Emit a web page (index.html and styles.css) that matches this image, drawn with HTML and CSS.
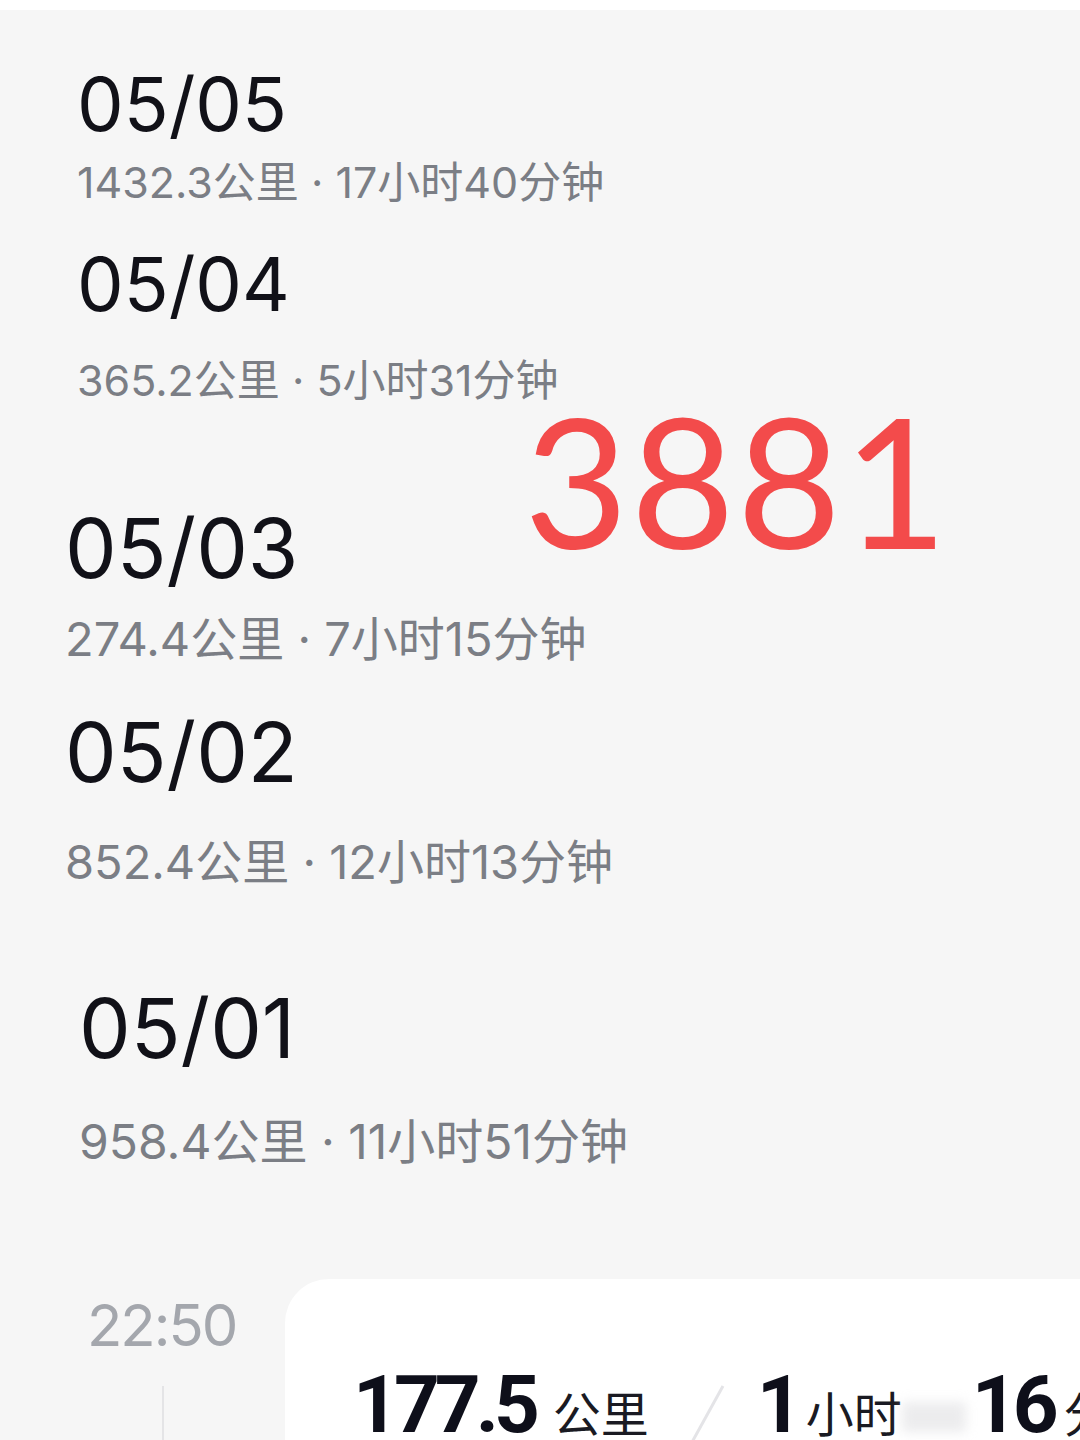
FILE: index.html
```html
<!DOCTYPE html>
<html lang="zh">
<head>
<meta charset="utf-8">
<link rel="stylesheet" href="styles.css">
</head>
<body>
<div class="topstrip"></div>
<main class="page">
  <section class="day d1">
    <div class="date">05/05</div>
    <div class="meta">1432.3公里 · 17小时40分钟</div>
  </section>
  <section class="day d2">
    <div class="date">05/04</div>
    <div class="meta">365.2公里 · 5小时31分钟</div>
    <div class="count">3881</div>
  </section>
  <section class="day d3">
    <div class="date big">05/03</div>
    <div class="meta big">274.4公里 · 7小时15分钟</div>
  </section>
  <section class="day d4">
    <div class="date big">05/02</div>
    <div class="meta big">852.4公里 · 12小时13分钟</div>
  </section>
  <section class="day d5">
    <div class="date big">05/01</div>
    <div class="meta big">958.4公里 · 11小时51分钟</div>
  </section>
  <section class="trip">
    <div class="timecol">
      <div class="time">22:50</div>
      <div class="rail"></div>
    </div>
    <div class="card">
      <div class="stats">
        <span class="num">177.5</span><span class="unit">公里</span>
        <svg class="slash" width="36" height="62" viewBox="0 0 36 62"><line x1="34" y1="2" x2="2" y2="60" stroke="#e4e4e7" stroke-width="3"/></svg>
        <span class="num">1</span><span class="unit u2">小时</span><span class="blur"></span>
        <span class="num n2">16</span><span class="unit u3">分钟</span>
      </div>
    </div>
  </section>
</main>
</body>
</html>
```
FILE: styles.css
```css
* { box-sizing: border-box; }
html, body { margin: 0; padding: 0; }
body {
  width: 1080px;
  height: 1440px;
  overflow: hidden;
  background: #f6f6f6;
  font-family: Inter, "Noto Sans CJK SC", sans-serif;
  color: #111118;
}
.topstrip { height: 10px; background: #ffffff; }
.page { position: relative; }
.day { position: relative; }
.date {
  font-size: 74px;
  line-height: 80px;
  font-weight: 400;
  color: #111118;
}
.date.big { font-size: 82px; line-height: 88px; }
.meta {
  font-size: 43px;
  line-height: 50px;
  color: #7b7e85;
  letter-spacing: 0;
}
.meta.big { font-size: 47px; line-height: 54px; }
.d5 .meta.big { font-size: 48px; }
.d1 { padding-left: 77px; padding-top: 54px; }
.d1 .meta { margin-top: 13px; }
.d2 { padding-left: 77px; padding-top: 37px; }
.d2 .meta { margin-top: 31px; }
.d3 { padding-left: 65px; padding-top: 100px; }
.d3 .meta { margin-top: 19px; }
.d4 { padding-left: 65px; padding-top: 43px; }
.d4 .meta { margin-top: 38px; }
.d5 { padding-left: 79px; padding-top: 96px; }
.d5 .meta { margin-top: 42px; }

.count {
  position: absolute;
  left: 524px;
  top: 182px;
  font-family: Lato, sans-serif;
  font-size: 180px;
  line-height: 180px;
  color: #f34b4b;
  letter-spacing: 2px;
}

.trip {
  display: flex;
  margin-top: 110px;
}
.timecol {
  width: 285px;
  flex: none;
  display: flex;
  flex-direction: column;
}
.time {
  padding-left: 87px;
  padding-top: 13px;
  font-size: 58px;
  line-height: 66px;
  color: #a4a7ad;
  letter-spacing: -2px;
}
.rail {
  margin-left: 162px;
  margin-top: 28px;
  width: 2px;
  height: 80px;
  background: #e4e4e6;
}
.card {
  flex: 1;
  background: #ffffff;
  border-top-left-radius: 44px;
  height: 200px;
  padding-left: 68px;
  padding-top: 86px;
  overflow: hidden;
}
.stats {
  display: flex;
  align-items: baseline;
  white-space: nowrap;
}
.stats > * { flex: none; }
.num {
  font-family: Roboto, sans-serif;
  font-weight: 700;
  font-size: 80px;
  line-height: 80px;
  letter-spacing: -5px;
  color: #0e0f1a;
}
.unit {
  font-size: 48px;
  color: #1a1a22;
  margin-left: 18px;
}
.u2 { margin-left: 8px; }
.u3 { margin-left: 10px; }
.slash { margin: 0 32px 0 40px; align-self: flex-end; }
.blur {
  display: inline-block;
  width: 64px;
  height: 30px;
  background: #d9d9dc;
  filter: blur(6px);
  opacity: 0.5;
}
.n2 { margin-left: 6px; }
```
